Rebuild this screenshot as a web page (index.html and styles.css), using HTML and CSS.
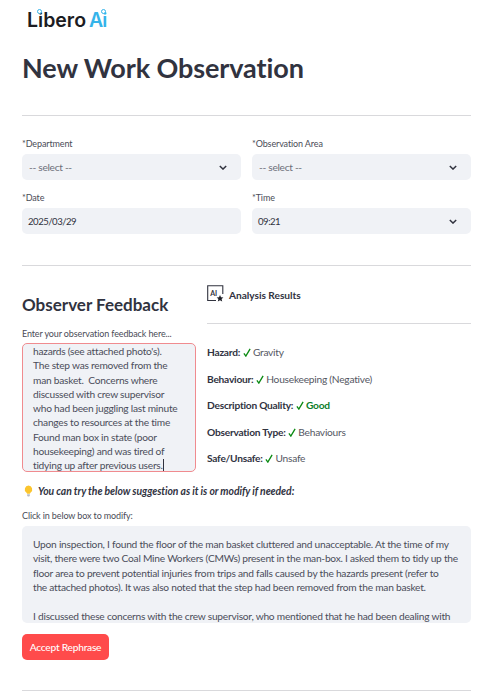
FILE: index.html
```html
<!DOCTYPE html>
<html lang="en">
<head>
<meta charset="utf-8">
<title>New Work Observation</title>
<link rel="stylesheet" href="styles.css">
</head>
<body>
<main class="page">
  <div class="logo"><span class="logo-i">Libero</span> <span class="logo-ai">Ai</span>
    <i class="ring ring-a"></i><i class="ring ring-b"></i></div>
  <h1>New Work Observation</h1>
  <hr class="rule rule-top">
  <section class="form-grid">
    <div class="field">
      <label>*Department</label>
      <div class="control"><span class="muted">-- select --</span>
        <svg class="chev" viewBox="0 0 10 6"><path d="M1 1l4 4 4-4"/></svg></div>
    </div>
    <div class="field">
      <label>*Observation Area</label>
      <div class="control"><span class="muted">-- select --</span>
        <svg class="chev" viewBox="0 0 10 6"><path d="M1 1l4 4 4-4"/></svg></div>
    </div>
    <div class="field">
      <label>*Date</label>
      <div class="control control-num"><span>2025/03/29</span></div>
    </div>
    <div class="field">
      <label>*Time</label>
      <div class="control control-num"><span>09:21</span>
        <svg class="chev" viewBox="0 0 10 6"><path d="M1 1l4 4 4-4"/></svg></div>
    </div>
  </section>
  <hr class="rule rule-mid">
  <section class="split">
    <div class="feedback">
      <h2>Observer Feedback</h2>
      <label>Enter your observation feedback here...</label>
      <div class="textbox textbox-err">hazards (see attached photo's).<br>The step was removed from the<br>man basket.&nbsp; Concerns where<br>discussed with crew supervisor<br>who had been juggling last minute<br>changes to resources at the time<br>Found man box in state (poor<br>housekeeping) and was tired of<br><span class="caret">tidying up after previous users.</span></div>
    </div>
    <div class="results">
      <div class="results-head">
        <svg class="ai-icon" viewBox="0 0 17 17">
          <path class="ai-frame" d="M9 15.5H.7V.7H15.8V9"/>
          <text x="3.2" y="10.5" class="ai-text">AI</text>
          <path class="ai-star" d="M13 10l1 2.3 2.4.2-1.8 1.6.6 2.4-2.2-1.3-2.2 1.3.6-2.4-1.8-1.6 2.4-.2z"/>
        </svg>
        <strong>Analysis Results</strong>
      </div>
      <hr class="rule rule-res">
      <p class="res"><b>Hazard:</b> <svg class="tick" viewBox="0 0 9 10"><path d="M1 6l2.2 3L8 1"/></svg> Gravity</p>
      <p class="res"><b>Behaviour:</b> <svg class="tick" viewBox="0 0 9 10"><path d="M1 6l2.2 3L8 1"/></svg> Housekeeping (Negative)</p>
      <p class="res"><b>Description Quality:</b> <svg class="tick" viewBox="0 0 9 10"><path d="M1 6l2.2 3L8 1"/></svg> <b class="good">Good</b></p>
      <p class="res"><b>Observation Type:</b> <svg class="tick" viewBox="0 0 9 10"><path d="M1 6l2.2 3L8 1"/></svg> Behaviours</p>
      <p class="res"><b>Safe/Unsafe:</b> <svg class="tick" viewBox="0 0 9 10"><path d="M1 6l2.2 3L8 1"/></svg> Unsafe</p>
    </div>
  </section>
  <p class="tip"><svg class="bulb" viewBox="0 0 10 13"><path class="bulb-glass" d="M5 .5a4.2 4.2 0 0 0-2.4 7.6c.5.4.7 1 .8 1.5h3.2c.1-.5.3-1.1.8-1.5A4.2 4.2 0 0 0 5 .5z"/><path class="bulb-base" d="M3.5 10.2h3v1.6l-.8.8H4.3l-.8-.8z"/></svg><em>You can try the below suggestion as it is or modify if needed:</em></p>
  <label class="modify-label">Click in below box to modify:</label>
  <div class="textbox textbox-wide">Upon inspection, I found the floor of the man basket cluttered and unacceptable. At the time of my<br>visit, there were two Coal Mine Workers (CMWs) present in the man-box. I asked them to tidy up the<br>floor area to prevent potential injuries from trips and falls caused by the hazards present (refer to<br>the attached photos). It was also noted that the step had been removed from the man basket.<br><br>I discussed these concerns with the crew supervisor, who mentioned that he had been dealing with</div>
  <button class="accept">Accept Rephrase</button>
  <hr class="rule rule-end">
</main>
</body>
</html>
```
FILE: styles.css
```css
html, body { margin: 0; height: 700px; overflow: hidden; background: #fff; }
body { font-family: "Lato", "Liberation Sans", sans-serif; color: #31333f; font-size: 10.2px; letter-spacing: -.24px; }
.page { padding: 0 33px 0 22px; position: relative; }
.logo { position: relative; height: 20px; padding: 10px 0 0 5px; font-family: "Inter", sans-serif; font-size: 19.5px; line-height: 21px; font-weight: 600; color: #1c1c22; letter-spacing: 0; }
.logo-ai { color: #35b4ea; margin-left: -2px; letter-spacing: -1px; }
.ring { position: absolute; width: 3px; height: 3px; border: 1px solid #35b4ea; border-radius: 50%; background: #fff; top: 9px; }
.ring-a { left: 15px; }
.ring-b { left: 79px; }
h1 { margin: 15px 0 0; font-size: 27px; line-height: 46px; font-weight: 700; letter-spacing: -.1px; }
.rule { border: 0; border-top: 1px solid #d9d9dc; margin: 0; }
.rule-top { margin-top: 24px; }
.form-grid { display: grid; grid-template-columns: 219px 219px; column-gap: 11px; row-gap: 11px; margin-top: 21px; }
label { display: block; font-size: 9px; line-height: 13px; color: #4a4c57; letter-spacing: -.12px; }
.field label { margin-bottom: 4px; }
.control { height: 26px; background: #f0f2f6; border-radius: 5px; display: flex; align-items: center; justify-content: space-between; padding: 0 14px 0 7px; font-size: 10.2px; letter-spacing: -.3px; }
.control-num { font-size: 9.6px; letter-spacing: -.5px; padding-left: 6px; }
.muted { color: #6d6f79; }
.chev { width: 8px; height: 5px; fill: none; stroke: #31333f; stroke-width: 1.8; }
.rule-mid { margin-top: 31px; }
.split { display: grid; grid-template-columns: 174px 264px; column-gap: 11px; }
h2 { margin: 20px 0 0; font-size: 17px; line-height: 38px; font-weight: 700; letter-spacing: 0; }
.feedback label { margin-top: 3px; margin-bottom: 3px; }
.textbox { background: #f0f2f6; border-radius: 5px; box-sizing: border-box; overflow: hidden; line-height: 14.4px; color: #4b4d5a; white-space: nowrap; }
.textbox-err { height: 129px; border: 1px solid #f08b8f; padding: 0 0 0 10px; line-height: 14.25px; }
.caret { border-right: 1px solid #31333f; }
.results { padding-top: 19px; }
.results-head { display: flex; align-items: center; gap: 5px; height: 20px; font-size: 10.2px; letter-spacing: -.05px; }
.results-head strong { font-weight: 700; }
.ai-icon { width: 17px; height: 17px; flex: none; margin-top: -3px; }
.ai-frame { fill: none; stroke: #31333f; stroke-width: 1.1; }
.ai-text { font-size: 7px; font-weight: 700; fill: #31333f; letter-spacing: 0; }
.ai-star { fill: #1f2028; }
.rule-res { margin-top: 18px; }
.res { margin: 0; line-height: 14px; height: 26.6px; color: #555763; }
.rule-res + .res { margin-top: 21px; }
.res b { font-weight: 700; color: #31333f; }
.tick { width: 8px; height: 9px; fill: none; stroke: #0a8a12; stroke-width: 1.5; vertical-align: -1px; }
.res .good { color: #0c7d2a; }
.tip { margin: 6px 0 0; display: flex; align-items: center; gap: 5px; padding-left: 2px; height: 14px; font-weight: 700; color: #31333f; font-size: 10.4px; letter-spacing: -.08px; }
.bulb { width: 9px; height: 12px; flex: none; }
.bulb-glass { fill: #fbc52e; }
.bulb-base { fill: #b9bbc0; }
.modify-label { margin-top: 11px; }
.textbox-wide { margin-top: 4px; height: 97px; padding: 11px 0 0 11px; }
.accept { display: block; margin-top: 11px; width: 87px; height: 26px; border: 0; border-radius: 5px; background: #ff4b4b; color: #fff; font: 500 10.2px "Lato", sans-serif; letter-spacing: -.24px; padding: 0; }
.rule-end { margin-top: 30px; }
```
